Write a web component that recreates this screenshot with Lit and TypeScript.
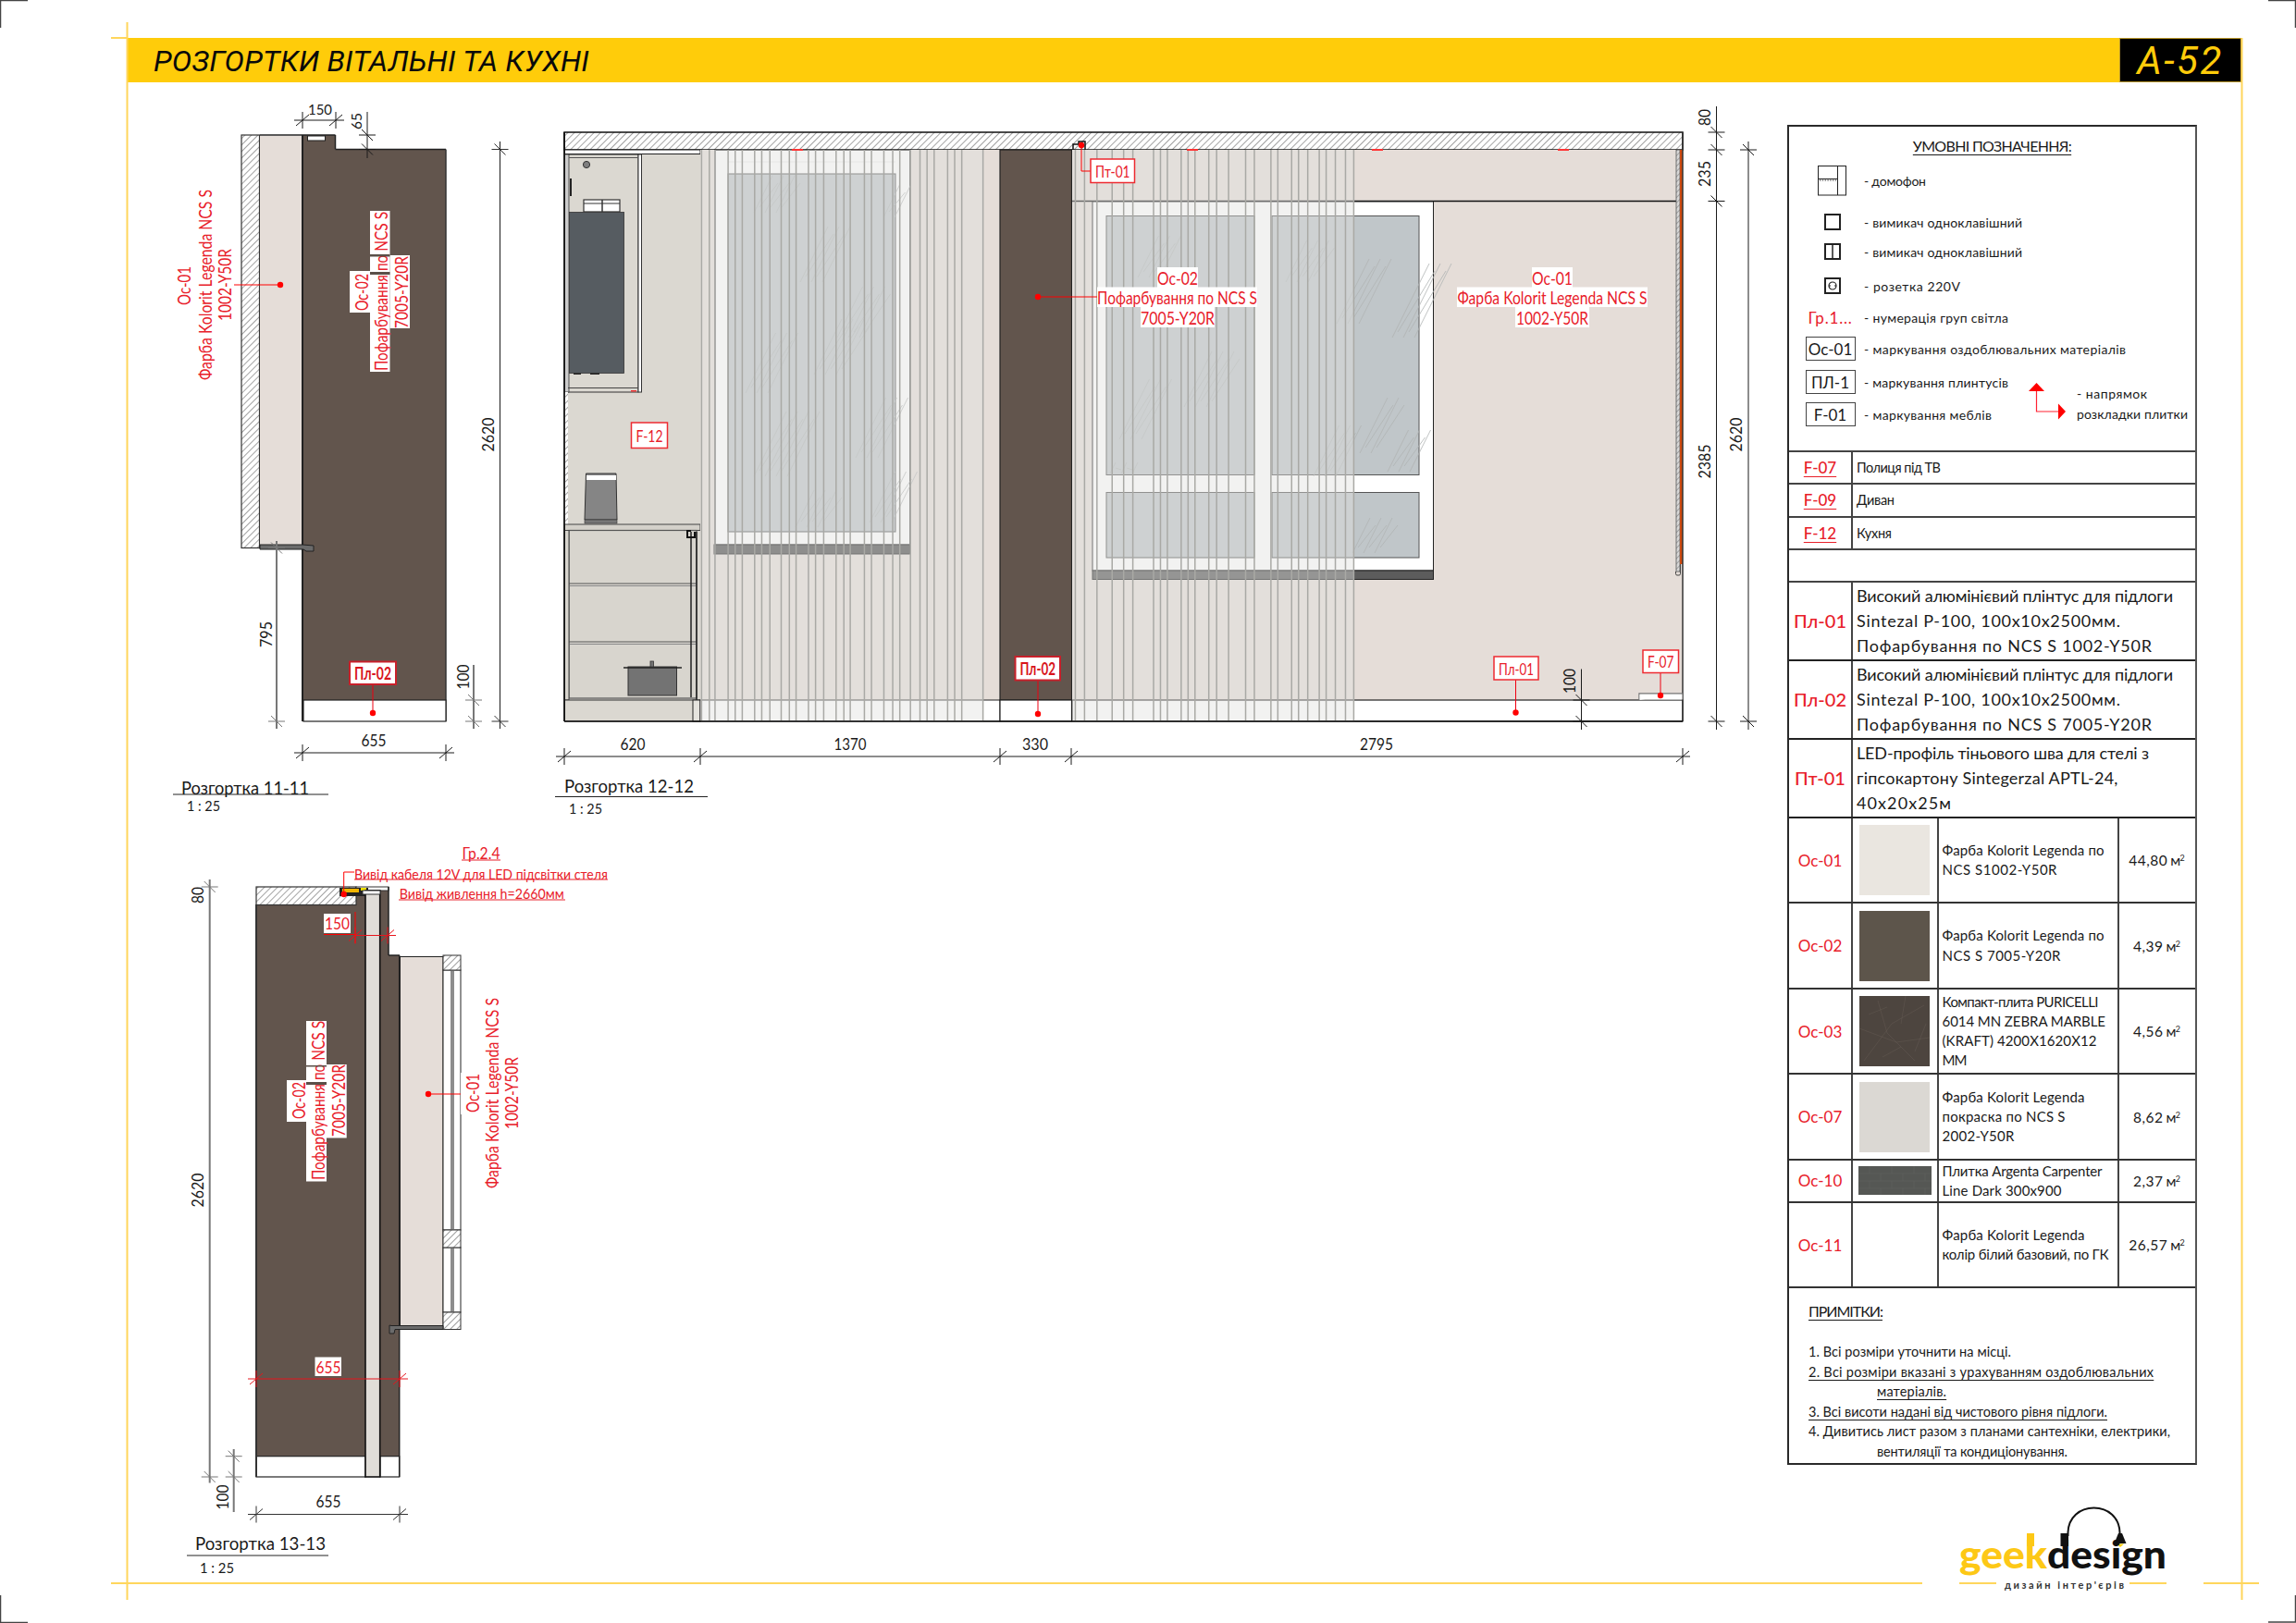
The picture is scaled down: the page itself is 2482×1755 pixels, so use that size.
import { LitElement, html, svg, css, nothing } from "lit";
import { customElement } from "lit/decorators.js";

const RED = "#e8202a";
const PT = "#ff0000";
const PINK = "#e5ddd8";
const BROWN = "#62554d";
const KIT = "#dbd8d1";
const INK = "#1a1a1a";
const VEIL = "rgba(224,224,222,.43)";

const ctx = document.createElement("canvas").getContext("2d") as CanvasRenderingContext2D;
/* letter-spacing that makes a line of text reach its measured width in the sheet */
const fit = (s: string, size: number, target: number) => {
  ctx.font = `400 ${size}px Lato, "Open Sans", sans-serif`;
  const w = ctx.measureText(s).width;
  return `letter-spacing:${((target - w) / Math.max(1, s.length - 1)).toFixed(3)}px`;
};
const FX = (s: string, size: number, target: number) => html`<span style=${fit(s, size, target)}>${s}</span>`;

type O = { size?: number; a?: string; fill?: string; len?: number; w?: number; r?: boolean };
const T = (x: number, y: number, s: string, o: O = {}) => svg`<text class="t" x=${x} y=${y}
  transform=${o.r ? `rotate(-90 ${x} ${y})` : nothing}
  text-anchor=${o.a ?? "middle"} dominant-baseline="central" font-size=${o.size ?? 17}
  font-weight=${o.w ?? 400} fill=${o.fill ?? INK}
  textLength=${o.len ?? nothing} lengthAdjust="spacingAndGlyphs">${s}</text>`;
const R = (x1: number, y1: number, x2: number, y2: number, fill = "none", st = "none", sw = 1) =>
  svg`<rect x=${x1} y=${y1} width=${x2 - x1} height=${y2 - y1} fill=${fill} stroke=${st} stroke-width=${sw}></rect>`;
const L = (x1: number, y1: number, x2: number, y2: number, st = INK, sw = 1) =>
  svg`<line x1=${x1} y1=${y1} x2=${x2} y2=${y2} stroke=${st} stroke-width=${sw}></line>`;
const D = (x: number, y: number, r = 3.2) => svg`<circle cx=${x} cy=${y} r=${r} fill=${PT}></circle>`;

const hDim = (y: number, x0: number, x1: number, ticks: number[], c = INK, sw = 1) => svg`
  ${L(x0, y, x1, y, c, sw)}
  ${ticks.map((x) => svg`${L(x, y - 9, x, y + 9, c)}${L(x - 7, y + 6, x + 7, y - 6, c)}`)}`;
const vDim = (x: number, y0: number, y1: number, ticks: number[], c = INK, sw = 1) => svg`
  ${L(x, y0, x, y1, c, sw)}
  ${ticks.map((y) => svg`${L(x - 9, y, x + 9, y, c)}${L(x - 6, y - 6, x + 6, y + 6, c)}`)}`;

const tag = (x1: number, y1: number, x2: number, y2: number, s: string, bold = false, size = 18) => svg`
  ${R(x1, y1, x2, y2, "#fff", bold ? "#c8202a" : "#ee2a30", bold ? 2 : 1.5)}
  ${T((x1 + x2) / 2, (y1 + y2) / 2, s, { size, fill: bold ? "#d8141c" : RED, w: bold ? 700 : 400, len: x2 - x1 - 10 })}`;

const glare = (x: number, y: number, n = 5, h = 50) =>
  Array.from({ length: n }, (_, i) => L(x + i * 6, y + h - (i % 2) * 6, x + i * 6 + h * 0.5, y + (i % 2) * 8, "#b0b4b4", 0.8));

const slatsA = [440, 462, 478, 515, 535, 555, 590, 610, 633, 665, 688, 707, 742, 762, 785, 820, 842, 860, 900, 920, 955, 980, 1000, 1030, 1057, 1077, 1097, 1135, 1155, 1175, 1235].map((v) => 590 + v / 2.613);
const slatsB = [25, 45, 72, 105, 130, 150, 195, 210, 225, 255, 270, 285, 315, 332, 358, 395, 414, 450, 465, 495, 510, 530, 555, 570, 590, 612, 630].map((v) => 1150 + v / 2.01);

const wallLabel = (x: number, top: string, mid: string, bot: string, ys: number[], boxes: number[][]) => svg`
  ${boxes.map((b) => R(b[0], b[1], b[2], b[3], "#fff"))}
  ${T(x, ys[0], top, { size: 19, fill: RED, len: 40, r: true })}
  ${T(x + 21.5, ys[1], mid, { size: 19, fill: RED, len: 172, r: true })}
  ${T(x + 43, ys[2], bot, { size: 19, fill: RED, len: 78, r: true })}`;

const elev1 = svg`
  ${R(261, 146, 280.5, 592.5, "url(#hatch)", "#333", 1.2)}
  ${R(281, 147, 327, 589, PINK)}
  <path d="M327 146H362.5V161.5H482V757H327Z" fill=${BROWN}></path>
  ${L(327, 146, 327, 780, "#222", 2)}${L(281, 146, 362.5, 146, "#222", 1.5)}
  ${L(362.5, 146, 362.5, 161.5, "#222", 1.5)}${L(362.5, 161.5, 482, 161.5, "#222", 1.5)}
  ${L(482, 161.5, 482, 780, "#333", 1.5)}
  ${R(328, 757, 482, 780, "#fff", "#222", 1.2)}
  ${R(332.5, 147, 351.5, 152, "#fff", "#222", 1)}
  <path d="M281 589H327L339 590V596H331L328 594H281Z" fill="#6b6b6b" stroke="#222" stroke-width="1"></path>
  ${hDim(130, 318, 372, [327, 363])}${T(346, 117, "150", { size: 16, len: 26 })}
  ${vDim(397, 121, 171, [146, 161.5])}${T(384, 131, "65", { r: true, size: 16, len: 18 })}
  ${vDim(540.5, 153, 788, [161.5, 780], "#333", 1.2)}${T(527, 470, "2620", { r: true, len: 37 })}
  ${vDim(299, 585, 788, [592.5, 780], "#777", 2)}${T(287, 686, "795", { r: true, len: 28 })}
  ${vDim(512, 719, 788, [757, 780], "#777", 2)}${T(500, 732, "100", { r: true, len: 27 })}
  ${hDim(814, 318, 491, [327, 482])}${T(404, 800, "655", { len: 27 })}
  ${T(198, 309, "Ос-01", { r: true, size: 19, fill: RED, len: 42 })}
  ${T(221, 308, "Фарба Kolorit Legenda NCS S", { r: true, size: 19, fill: RED, len: 206 })}
  ${T(242, 308, "1002-Y50R", { r: true, size: 19, fill: RED, len: 78 })}
  ${L(253, 308, 303, 308, PT)}${D(303, 308)}
  ${wallLabel(390, "Ос-02", "Пофарбування по NCS S", "7005-Y20R", [316, 315, 316], [[378, 293, 400, 338], [400, 228, 421.5, 402], [421.5, 276, 443, 355]])}
  ${R(400, 275, 421.5, 277.5, "#5a4f48")}${R(400, 294, 421.5, 297, "#5a4f48")}
  ${L(403, 740, 403, 771, "#e01")}${D(403, 771)}
  ${tag(378, 715.5, 428, 740, "Пл-02", true)}
  ${T(196, 851, "Розгортка 11-11", { a: "start", size: 19, len: 138 })}
  ${L(187, 859, 355, 859, "#222", 1)}
  ${T(202, 871, "1 : 25", { a: "start", size: 15, len: 36 })}`;

const elev2 = svg`
  ${R(610, 143, 1819, 162, "url(#hatch)", "#111", 1.5)}
  ${R(610, 162, 757, 780, KIT)}
  ${R(610.5, 162, 757, 166.5, "#fff", "#222", 1)}
  ${R(614, 167, 690, 424, KIT, "#333", 1)}
  ${R(690, 167, 693.5, 424, "#fff", "#333", 1)}
  ${R(610.5, 167, 615, 424, "#ccc", "#333", 0.8)}
  ${R(615, 170, 690, 171, "#555")}
  <ellipse cx="634" cy="178" rx="3.6" ry="3.6" fill="#7f7f7f" stroke="#333"></ellipse>
  ${R(616, 193, 618, 212, "#222")}
  ${R(631, 216, 670, 229, "#fff", "#333", 1.2)}${L(651, 216, 651, 229, "#333", 1.5)}${L(631, 220, 670, 220, "#333", 1)}
  ${R(615.5, 229.5, 674.5, 403.5, "#565c61", "#333", 0.8)}
  ${R(620, 403.5, 628, 405, "#222")}${R(638, 403.5, 648, 405, "#222")}
  ${R(682, 422, 688, 423.5, "#e33")}
  ${L(614, 419.5, 690, 419.5, "#444", 1)}
  ${R(611, 424, 614, 567, "url(#hatch)")}
  <path d="M633.5 512H666L667 562H632Z" fill="#858585" stroke="#333" stroke-width="1"></path>
  ${R(634, 514, 666, 519, "#fff")}${R(632, 562, 667, 566, "#777", "#333", 0.6)}
  ${R(610.5, 567, 757, 573.5, "#d4d1ca", "#444", 1)}
  ${R(615, 573.5, 753, 755, "#d8d5ce", "#555", 1.2)}
  ${L(615, 631, 753, 631, "#555", 1)}${L(615, 633.5, 753, 633.5, "#888", 1)}
  ${L(615, 694, 753, 694, "#555", 1)}${L(615, 696.5, 753, 696.5, "#888", 1)}
  ${R(610.5, 573.5, 615, 757, "#d8d5ce", "#444", 1)}
  <path d="M747 575V754M753 575V780" stroke="#222" stroke-width="1.5"></path>
  <path d="M747 574H743V581H751V575" fill="none" stroke="#111" stroke-width="2"></path>
  ${R(679, 721, 731.5, 752, "#737373", "#333", 1)}${L(674, 722, 737, 722, "#222", 1.6)}
  ${R(703, 715, 706.5, 721, "#737373", "#333", 0.8)}
  ${R(610.5, 757, 757, 780, "#dbd8d1", "#333", 1)}${R(749, 757, 757, 780, "#e5e3dd", "#222", 1)}
  ${R(757, 162, 1081, 757, PINK)}
  ${R(773, 162.5, 983.5, 589, "#fff", "#444", 1)}
  ${R(787, 188, 968, 575, "#c0c6c9", "#555", 1)}
  ${L(787, 175, 968, 175, "#ddd", 0.6)}
  ${glare(815, 190, 6, 40)}${glare(865, 245, 5, 60)}${glare(905, 310, 6, 55)}${glare(806, 360, 5, 65)}
  ${glare(880, 345, 6, 60)}${glare(815, 445, 7, 70)}${glare(925, 430, 5, 65)}${glare(860, 530, 6, 40)}
  ${glare(940, 510, 5, 55)}${glare(955, 200, 3, 35)}
  ${R(772, 589, 983.5, 599, "#4f4f4f", "#222", 1)}
  ${R(757, 757, 1081, 780, "#fff", "#222", 1)}
  ${R(1081, 162, 1158.5, 757, BROWN, "#222", 1.2)}
  ${R(1081, 757, 1158.5, 780, "#fff", "#222", 1.2)}
  ${R(1159, 162, 1819, 757, PINK)}
  ${R(1159, 757, 1819, 780, "#fff", "#222", 1.2)}
  ${L(1159, 217.5, 1812, 217.5, "#111", 1.5)}
  ${R(1181, 218, 1549.5, 617, "#fff", "#222", 1)}
  ${R(1196, 233.5, 1356, 513.5, "#c0c6c9", "#555", 1)}
  ${R(1196, 532.5, 1356, 603, "#c0c6c9", "#555", 1)}
  ${R(1375, 233.5, 1534, 513.5, "#c0c6c9", "#555", 1)}
  ${R(1375, 532.5, 1534, 603, "#c0c6c9", "#555", 1)}
  ${glare(1230, 255, 5, 45)}${glare(1210, 410, 5, 65)}${glare(1200, 500, 5, 12)}${glare(1390, 260, 6, 45)}
  ${glare(1445, 280, 5, 70)}${glare(1505, 285, 5, 80)}${glare(1500, 465, 5, 45)}${glare(1462, 560, 6, 38)}
  ${glare(1470, 430, 4, 60)}${glare(1420, 460, 5, 55)}${glare(1280, 380, 6, 60)}
  ${R(1181, 617, 1549.5, 626.5, "#5c5c5c", "#222", 1)}
  ${R(1812, 162, 1816, 618, "url(#hatch2)", "#555", 0.8)}
  ${R(1816, 162, 1819, 610, "#cf4a10")}
  <path d="M1811.5 618V620.5Q1811.5 622 1813 622H1815Q1816.5 622 1816.5 620.5V610" fill="none" stroke="#444"></path>
  ${L(1819, 143, 1819, 780, "#333", 1.5)}
  <path d="M1772 757V750H1819" fill="#fff" stroke="#777" stroke-width="1.4"></path>
  ${R(1772.5, 750.7, 1818.5, 756.5, "#fff")}
  ${R(757, 162, 1063, 780, VEIL)}
  ${R(1159, 162, 1463, 780, VEIL)}
  ${slatsA.map((x) => L(x, 162, x, 780, "#a9a9a5", 1.5))}
  ${slatsB.map((x) => L(x, 162, x, 780, "#a9a9a5", 1.5))}
  ${L(610, 780, 1819, 780, "#111", 1.5)}${L(610, 143, 610, 780, "#111", 1.8)}
  <path d="M1160 162V156H1166V153H1173V162" fill="none" stroke="#111" stroke-width="1.5"></path>
  ${[862, 1289, 1489, 1690].map((x) => R(x - 6, 161, x + 6, 163, "#f33"))}
  ${L(1122, 321, 1187, 321, PT)}${D(1122, 321)}
  ${R(1251, 289, 1295, 311, "#fff")}${R(1186, 310.5, 1359, 332, "#fff")}${R(1233, 332, 1313, 354, "#fff")}
  ${T(1273, 300, "Ос-02", { size: 19, fill: RED, len: 44 })}
  ${T(1272.5, 321, "Пофарбування по NCS S", { size: 19, fill: RED, len: 173 })}
  ${T(1273, 343, "7005-Y20R", { size: 19, fill: RED, len: 80 })}
  ${R(1656, 289, 1700, 311, "#fff")}${R(1575, 310.5, 1781, 332, "#fff")}${R(1638, 332, 1718, 354, "#fff")}
  ${T(1678, 300, "Ос-01", { size: 19, fill: RED, len: 44 })}
  ${T(1678, 321, "Фарба Kolorit Legenda NCS S", { size: 19, fill: RED, len: 205 })}
  ${T(1678, 343, "1002-Y50R", { size: 19, fill: RED, len: 78 })}
  ${tag(682.5, 457, 721.5, 484.5, "F-12", false)}
  <path d="M1169 157V185H1179" fill="none" stroke=${PT}></path>${D(1169, 157)}
  ${tag(1179, 172, 1226.5, 197.5, "Пт-01", false)}
  ${L(1122, 735, 1122, 772, "#e01")}${D(1122, 772)}
  ${tag(1097.5, 710, 1146, 735.5, "Пл-02", true)}
  ${L(1638.5, 735, 1638.5, 770.5, "#e01")}${D(1638.5, 770.5)}
  ${tag(1615, 710, 1663, 735, "Пл-01", false)}
  ${L(1795, 727, 1795, 752, "#e01")}${D(1795, 752)}
  ${tag(1776, 703, 1814.5, 727.5, "F-07", false)}
  ${vDim(1709.5, 723.5, 789, [757, 780])}${T(1696, 736.5, "100", { r: true, len: 27 })}
  ${vDim(1855.5, 115, 789, [143, 162, 217.5, 780])}
  ${T(1842.5, 127, "80", { r: true, len: 18 })}${T(1842.5, 188, "235", { r: true, len: 28 })}${T(1842.5, 499, "2385", { r: true, len: 37 })}
  ${vDim(1890, 153, 789, [162, 780])}${T(1876, 470, "2620", { r: true, len: 37 })}
  ${hDim(818, 601, 1827, [610, 757, 1081, 1158, 1819])}
  ${T(684, 804.5, "620", { len: 27 })}${T(919, 804.5, "1370", { len: 35 })}${T(1119, 804.5, "330", { len: 28 })}${T(1488, 804.5, "2795", { len: 36 })}
  ${T(610, 849.5, "Розгортка 12-12", { a: "start", size: 19, len: 140 })}
  ${L(600, 861.5, 765, 861.5, "#222", 1)}
  ${T(615, 874, "1 : 25", { a: "start", size: 15, len: 36 })}`;

const elev3 = svg`
  <path d="M277 978H385V959H420V1033H431.7V1597H277Z" fill=${BROWN}></path>
  ${R(277, 959, 385, 978.5, "url(#hatch)", "#333", 1.2)}
  ${R(385, 959, 420, 963, "#fff", "#333", 1)}
  ${R(367, 960, 398, 969, "#222")}${R(370, 961, 388, 965, "#f0b400")}${R(390, 960, 396, 963, "#f0e000")}
  ${R(277, 1574.7, 395, 1597, "#fff", "#222", 1.2)}
  ${R(411, 1574.7, 431.7, 1597, "#fff", "#222", 1.2)}
  ${R(395, 963, 410.7, 1597, "#e0ddd8", "#111", 1.6)}
  ${R(392, 963, 411, 967, "#fff", "#333", 1)}
  ${L(277, 978, 277, 1597, "#333", 2)}${L(420, 959, 420, 1033, "#222", 1.5)}${L(420, 1033, 432, 1033, "#222", 1.5)}${L(431.7, 1033, 431.7, 1597, "#222", 1.5)}
  ${R(432.5, 1034.5, 479, 1433.5, PINK, "#222", 1)}
  ${R(479, 1049, 498, 1330, "#fff", "#222", 1)}${R(487, 1049, 491, 1330, "#8d8d8d")}
  ${R(479, 1349, 498, 1419, "#fff", "#222", 1)}${R(487, 1349, 491, 1419, "#8d8d8d")}
  ${R(479, 1033, 498, 1049, "url(#hatch)", "#333", 1)}
  ${R(479, 1330, 498, 1349, "url(#hatch)", "#333", 1)}
  ${R(479, 1419, 498, 1437.5, "url(#hatch)", "#333", 1)}
  <path d="M479 1437.5V1433.5H423L421 1433V1442H426L427 1437.5Z" fill="#6b6b6b" stroke="#222"></path>
  ${vDim(226.7, 951, 1603.5, [959, 1597], "#777", 2)}
  ${T(213, 1287, "2620", { r: true, len: 37 })}${T(213, 968, "80", { r: true, len: 18 })}
  ${vDim(252.7, 1567, 1635, [1574.7, 1597], "#777", 2)}${T(240, 1619, "100", { r: true, len: 27 })}
  ${hDim(1637.5, 268, 441, [277, 432], "#333")}${T(355, 1623, "655", { len: 27 })}
  ${hDim(1491, 268, 441, [277, 432], "#e8141c")}
  ${R(340.5, 1467.5, 369, 1488, "#fff")}${T(355, 1478, "655", { fill: RED, len: 27 })}
  ${R(350, 988, 379, 1009, "#fff")}${T(364.5, 998.5, "150", { fill: RED, len: 27 })}
  ${L(350, 1010.5, 384, 1010.5, PT)}
  ${L(384, 986, 384, 1020, PT)}${hDim(1011.5, 384, 428, [384, 419], "#e8141c")}
  ${T(520, 922, "Гр.2.4", { size: 17, fill: RED, len: 41 })}${L(499, 930, 541, 930, RED)}
  <path d="M371.7 967V943H383" fill="none" stroke=${PT}></path>${D(371.7, 967)}
  ${T(383, 944.5, "Вивід кабеля 12V для LED підсвітки стеля", { a: "start", size: 16, fill: RED, len: 274 })}${L(383, 951, 657, 951, RED)}
  ${T(431.7, 965, "Вивід живлення h=2660мм", { a: "start", size: 16, fill: RED, len: 178 })}${L(431, 973, 611, 973, RED)}
  ${wallLabel(322, "Ос-02", "Пофарбування по NCS S", "7005-Y20R", [1190, 1190, 1190], [[310, 1168, 331, 1213], [331, 1104, 353, 1277.5], [353, 1151, 374.7, 1230.5]])}
  ${R(331, 1152, 353, 1153.5, "#5a4f48")}${R(331, 1170, 353, 1173, "#5a4f48")}
  ${L(463, 1183, 505, 1183, PT)}${D(463, 1183)}
  ${R(498, 1160, 508, 1205, "#fff")}
  ${T(510, 1182, "Ос-01", { r: true, size: 19, fill: RED, len: 42 })}
  ${T(531, 1182, "Фарба Kolorit Legenda NCS S", { r: true, size: 19, fill: RED, len: 206 })}
  ${T(552, 1182, "1002-Y50R", { r: true, size: 19, fill: RED, len: 78 })}
  ${T(211, 1668, "Розгортка 13-13", { a: "start", size: 19, len: 141 })}
  ${L(202, 1682, 355, 1682, "#222", 1)}
  ${T(216, 1695, "1 : 25", { a: "start", size: 15, len: 37 })}`;

const legendRows: any[] = [
  { icon: svg`<svg width="32" height="33" viewBox="0 0 32 33"><rect x=".5" y=".5" width="30" height="31.5" fill="#fff" stroke="#222"></rect><path d="M21.5 .5V32" stroke="#222" stroke-width="1"></path><path d="M.5 14.5H21.5" stroke="#222"></path><path d="M2 16H20" stroke="#333" stroke-dasharray="1.4 1.4"></path></svg>`, text: "- домофон", w: 67 },
  { icon: svg`<svg width="18" height="18" viewBox="0 0 18 18"><rect x="1" y="1" width="16" height="16" fill="#fff" stroke="#222" stroke-width="2"></rect></svg>`, text: "- вимикач одноклавішний", w: 171 },
  { icon: svg`<svg width="18" height="18" viewBox="0 0 18 18"><rect x="1" y="1" width="16" height="16" fill="#fff" stroke="#222" stroke-width="2"></rect><path d="M9 1V17" stroke="#222" stroke-width="1.5"></path></svg>`, text: "- вимикач одноклавішний", w: 171 },
  { icon: svg`<svg width="18" height="18" viewBox="0 0 18 18"><rect x="1" y="1" width="16" height="16" fill="#fff" stroke="#222" stroke-width="2"></rect><circle cx="9" cy="9" r="4" fill="none" stroke="#222" stroke-width="1.2"></circle><path d="M5 9H7M11 9H13" stroke="#222"></path></svg>`, text: "- розетка 220V", w: 104 },
  { label: "Гр.1...", text: "- нумерація груп світла", w: 156 },
  { box: "Ос-01", text: "- маркування оздоблювальних матеріалів", w: 283 },
  { box: "ПЛ-1", text: "- маркування плинтусів", w: 156 },
  { box: "F-01", text: "- маркування меблів", w: 138 },
];
const furn: [string, string, number][] = [["F-07", "Полиця під ТВ", 91], ["F-09", "Диван", 41], ["F-12", "Кухня", 38]];
const specs: [string, [string, number][]][] = [
  ["Пл-01", [["Високий алюмінієвий плінтус для підлоги", 342], ["Sintezal P-100, 100х10х2500мм.", 285], ["Пофарбування по NCS S 1002-Y50R", 319]]],
  ["Пл-02", [["Високий алюмінієвий плінтус для підлоги", 342], ["Sintezal P-100, 100х10х2500мм.", 285], ["Пофарбування по NCS S 7005-Y20R", 319]]],
  ["Пт-01", [["LED-профіль тіньового шва для стелі з", 316], ["гіпсокартону Sintegerzal APTL-24,", 283], ["40х20х25м", 102]]],
];
const mats: { code: string; cls: string; lines: [string, number][]; q: string; rowCls: string }[] = [
  { code: "Ос-01", cls: "s1", lines: [["Фарба Kolorit Legenda по", 175], ["NCS S1002-Y50R", 124]], q: "44,80", rowCls: "m" },
  { code: "Ос-02", cls: "s2", lines: [["Фарба Kolorit Legenda по", 175], ["NCS S 7005-Y20R", 128]], q: "4,39", rowCls: "m" },
  { code: "Ос-03", cls: "s3", lines: [["Компакт-плита PURICELLI", 169], ["6014 MN ZEBRA MARBLE", 177], ["(KRAFT) 4200X1620X12", 167], ["MM", 27]], q: "4,56", rowCls: "m" },
  { code: "Ос-07", cls: "s4", lines: [["Фарба Kolorit Legenda", 154], ["покраска по NCS S", 133], ["2002-Y50R", 78]], q: "8,62", rowCls: "m" },
  { code: "Ос-10", cls: "s5", lines: [["Плитка Argenta Carpenter", 173], ["Line Dark 300х900", 129]], q: "2,37", rowCls: "m short" },
  { code: "Ос-11", cls: "s6", lines: [["Фарба Kolorit Legenda", 154], ["колір білий базовий, по ГК", 180]], q: "26,57", rowCls: "m last" },
];

@customElement("app-root")
export class AppRoot extends LitElement {
  static styles = css`
    :host { display: block; width: 2482px; height: 1755px; background: #fff; position: relative; overflow: hidden;
      font-family: Lato, "Open Sans", "Noto Sans", sans-serif; color: #1a1a1a; }
    .t { font-family: Lato, "Open Sans", "Noto Sans", sans-serif; }
    .frame { position: absolute; left: 0; top: 0; pointer-events: none; }
    .sheet { display: flex; flex-direction: column; padding: 41px 0 0 138px; }
    .head { width: 2285px; height: 48px; background: #ffcc0a; display: flex; justify-content: space-between; align-items: stretch; }
    .title { font: italic 400 32px Roboto, sans-serif; color: #0a0a0a; padding-left: 28px; line-height: 50px; letter-spacing: .25px; white-space: nowrap; }
    .code { width: 132px; background: #000; color: #ffcc0a; font: italic 400 42px Roboto, sans-serif; letter-spacing: 2.5px; text-align: center; line-height: 48px; border: 1px solid #b8962a; box-sizing: border-box; }
    .main { display: flex; margin-top: 46px; }
    .draw { width: 1794px; height: 1620px; flex: none; display: block; overflow: visible; }
    .right { display: flex; flex-direction: column; }
    .panel { width: 443px; box-sizing: border-box; border: 2px solid #2a2a2a; border-right-color: #555; height: 1449px; display: flex; flex-direction: column; }
    .legend { height: 352px; flex: none; position: relative; border-bottom: 2px solid #444; box-sizing: border-box; }
    .lh { text-align: center; font-size: 16px; line-height: 20px; padding-top: 11px; height: 34px; text-decoration: underline; text-underline-offset: 3px; }
    .lrows { display: grid; grid-template-rows: 45px 32px 37px 34px 34px 36px 35px 26px; }
    .lr { display: grid; grid-template-columns: 81px 1fr; height: 26px; align-items: center; }
    .lic { display: flex; justify-content: center; align-items: center; height: 26px; }
    .lic svg { display: block; flex: none; margin-left: 13px; }
    .ltx { font-size: 14px; white-space: nowrap; }
    .glab { color: #e8202a; font-size: 17px; letter-spacing: .8px; margin-left: 8px; }
    .bx { width: 54px; height: 26px; box-sizing: border-box; border: 1.5px solid #444; display: flex; justify-content: center; align-items: center; font-size: 17px; flex: none; margin-left: 8px; }
    .dir { position: absolute; left: 258.7px; top: 277px; width: 48px; height: 42px; display: block; }
    .dirt { position: absolute; left: 311px; top: 278px; font-size: 14px; line-height: 22px; white-space: nowrap; }
    .fr { display: grid; grid-template-columns: 69px 1fr; height: 35.3px; flex: none; border-bottom: 2px solid #444; box-sizing: border-box; align-items: stretch; }
    .code-c { color: #e8202a; display: flex; align-items: center; justify-content: center; font-size: 17px; font-weight: 500; border-right: 2px solid #444; }
    .code-c.u { text-decoration: underline; text-underline-offset: 3px; font-size: 17px; }
    .code-c.big { font-size: 20px; }
    .fd { display: flex; align-items: center; padding-left: 4px; font-size: 14.5px; white-space: nowrap; }
    .gap { height: 35px; flex: none; border-bottom: 2px solid #444; box-sizing: border-box; }
    .sr { display: grid; grid-template-columns: 69px 1fr; height: 85px; flex: none; border-bottom: 2px solid #222; box-sizing: border-box; }
    .sd { padding: 1px 0 0 4px; font-size: 18px; line-height: 27.2px; white-space: nowrap; }
    .sd div { height: 27.2px; }
    .m { display: grid; grid-template-columns: 69px 92.5px 195px 1fr; height: 92.5px; flex: none; border-bottom: 2px solid #333; box-sizing: border-box; }
    .m.short { height: 46px; }
    .m .cc { font-size: 17px; font-weight: 400; }
    .sw { display: flex; justify-content: center; align-items: center; border-right: 2px solid #444; }
    .swatch { width: 76px; height: 76px; display: block; }
    .s1 { background: #eae6e0; } .s2 { background: #5d554b; } .s4 { background: #dbd8d3; }
    .s5 { width: 79px; height: 31px; } .s6 { background: #fff; }
    .md { display: flex; flex-direction: column; justify-content: center; padding-left: 4px; border-right: 2px solid #444; font-size: 15px; line-height: 21.2px; white-space: nowrap; }
    .q { display: flex; justify-content: center; align-items: center; font-size: 15.5px; letter-spacing: .5px; gap: 3px; }
    .q sup { font-size: 9px; line-height: 0; margin-left: -1px; vertical-align: 5px; }
    .notes { padding: 14px 0 0 21px; font-size: 14.5px; line-height: 21.6px; white-space: nowrap; }
    .nh { font-size: 16px; margin-bottom: 22px; text-decoration: underline; text-underline-offset: 3px; }
    .u { text-decoration: underline; text-underline-offset: 3px; }
    .ind { padding-left: 74px; }
    .logo { display: block; margin: 40px 0 0 0; width: 443px; height: 130px; overflow: visible; }
    .lg { font-family: Lato, "Open Sans", sans-serif; font-weight: 900; }
  `;

  render() {
    return html`
      <svg class="frame" width="2482" height="1755" viewBox="0 0 2482 1755">
        <g stroke="#ffd65c" stroke-width="2" fill="none">
          <path d="M137.5 24V1730M120 41H138M120 1712H2078M2382 1712H2442M2423.5 41V1730"></path>
          <path d="M2118 1712H2158M2302 1712H2342"></path>
        </g>
        <g stroke="#444" stroke-width="1.5" fill="none">
          <path d="M.5 30V.5H30M2452 .5H2481.5V30M2452 1754H2481.5V1725M.5 1725V1754.5H30"></path>
        </g>
      </svg>
      <div class="sheet">
        <header class="head">
          <div class="title">РОЗГОРТКИ ВІТАЛЬНІ ТА КУХНІ</div>
          <div class="code">А-52</div>
        </header>
        <div class="main">
          <svg class="draw" viewBox="138 135 1794 1620">
            <defs>
              <pattern id="hatch" width="5" height="5" patternUnits="userSpaceOnUse" patternTransform="rotate(-45)">
                <rect width="5" height="5" fill="#fff"></rect><line x1="0" y1="0" x2="5" y2="0" stroke="#6f6f6f" stroke-width="1.3"></line>
              </pattern>
              <pattern id="hatch2" width="4" height="4" patternUnits="userSpaceOnUse" patternTransform="rotate(-45)">
                <rect width="4" height="4" fill="#d8d8d8"></rect><line x1="0" y1="0" x2="4" y2="0" stroke="#666" stroke-width="1"></line>
              </pattern>
            </defs>
            ${elev1}${elev2}${elev3}
          </svg>
          <div class="right">
            <section class="panel">
              <div class="legend">
                <div class="lh">${FX("УМОВНІ ПОЗНАЧЕННЯ:", 16, 172)}</div>
                <div class="lrows">
                  ${legendRows.map((r) => html`<div class="lr">
                    <div class="lic">${r.icon ?? nothing}${r.label ? html`<span class="glab">${r.label}</span>` : nothing}${r.box ? html`<span class="bx">${r.box}</span>` : nothing}</div>
                    <div class="ltx">${FX(r.text, 14, r.w)}</div>
                  </div>`)}
                </div>
                <svg class="dir" viewBox="0 0 48 42"><path d="M8.5 6V31H32" fill="none" stroke="#f23" stroke-width="1.2"></path><path d="M0 9L8.5 0L17 9ZM32 22.5L40 31L32 39.5Z" fill="#f00"></path></svg>
                <div class="dirt">${FX("- напрямок", 14, 76)}<br />${FX("розкладки плитки", 14, 120)}</div>
              </div>
              ${furn.map(([c, d, w]) => html`<div class="fr"><div class="code-c u">${c}</div><div class="fd">${FX(d, 14.5, w)}</div></div>`)}
              <div class="gap"></div>
              ${specs.map(([c, lines]) => html`<div class="sr"><div class="code-c big">${c}</div><div class="sd">${lines.map(([s, w]) => html`<div>${FX(s, 18, w)}</div>`)}</div></div>`)}
              ${mats.map((m) => html`<div class=${m.rowCls}>
                <div class="code-c cc">${m.code}</div>
                <div class="sw">
                  ${m.cls === "s3"
                    ? html`<svg class="swatch" viewBox="0 0 76 76"><rect width="76" height="76" fill="#4d453f"></rect><g stroke="#6a6159" stroke-width=".4" fill="none"><path d="M5 70L35 30L70 10M20 5L30 40L60 70M0 35L40 50L76 45M50 0L45 30M10 20L30 12M60 60L72 30M25 66L45 55"></path></g></svg>`
                    : m.cls === "s5"
                    ? html`<svg class="swatch s5" viewBox="0 0 79 31"><rect width="79" height="31" fill="#555754"></rect><g stroke="#626461" stroke-width=".5"><path d="M0 8H79M0 16H79M0 24H79M12 0V8M36 0V8M60 0V8M24 8V16M48 8V16M72 8V16M12 16V24M36 16V24M60 16V24M24 24V31M48 24V31M72 24V31"></path></g></svg>`
                    : html`<div class="swatch ${m.cls}"></div>`}
                </div>
                <div class="md">${m.lines.map(([s, w]) => html`<div>${FX(s, 15, w)}</div>`)}</div>
                <div class="q">${m.q} <span>м<sup>2</sup></span></div>
              </div>`)}
              <div class="notes">
                <div class="nh">${FX("ПРИМІТКИ:", 16, 81)}</div>
                <div>${FX("1. Всі розміри уточнити на місці.", 14.5, 219)}</div>
                <div class="u">${FX("2. Всі розміри вказані з урахуванням оздоблювальних", 14.5, 373)}</div>
                <div class="u ind">${FX("матеріалів.", 14.5, 75)}</div>
                <div class="u">${FX("3. Всі висоти надані від чистового рівня підлоги.", 14.5, 323)}</div>
                <div>${FX("4. Дивитись лист разом з планами сантехніки, електрики,", 14.5, 391)}</div>
                <div class="ind">${FX("вентиляції та кондиціонування.", 14.5, 206)}</div>
              </div>
            </section>
            <svg class="logo" viewBox="1932 1623 443 130">
              <path d="M2235.5 1660V1656C2236 1640 2248 1629.5 2263.5 1629.5C2279 1629.5 2291 1640 2291.5 1656V1660" fill="none" stroke="#111" stroke-width="2"></path>
              <path d="M2290 1657H2294L2298.5 1668H2285.5Z" fill="#111"></path>
              <path d="M2288 1668.5H2296L2292 1672Z" fill="#ffcc0a"></path>
              <rect x="2191" y="1657" width="8" height="14" fill="#fdc816"></rect>
              <rect x="2227.5" y="1657" width="8.5" height="14" fill="#111"></rect>
              <text class="lg" x="2118" y="1695" font-size="42" fill="#fdc816" textLength="95" lengthAdjust="spacingAndGlyphs">geek</text>
              <text class="lg" x="2213" y="1695" font-size="42" fill="#111" textLength="129" lengthAdjust="spacingAndGlyphs">design</text>
              <text class="t" x="2231.5" y="1712" text-anchor="middle" dominant-baseline="central" font-size="11" font-weight="700" fill="#333" textLength="129">дизайн інтер'єрів</text>
            </svg>
          </div>
        </div>
      </div>
    `;
  }
}
